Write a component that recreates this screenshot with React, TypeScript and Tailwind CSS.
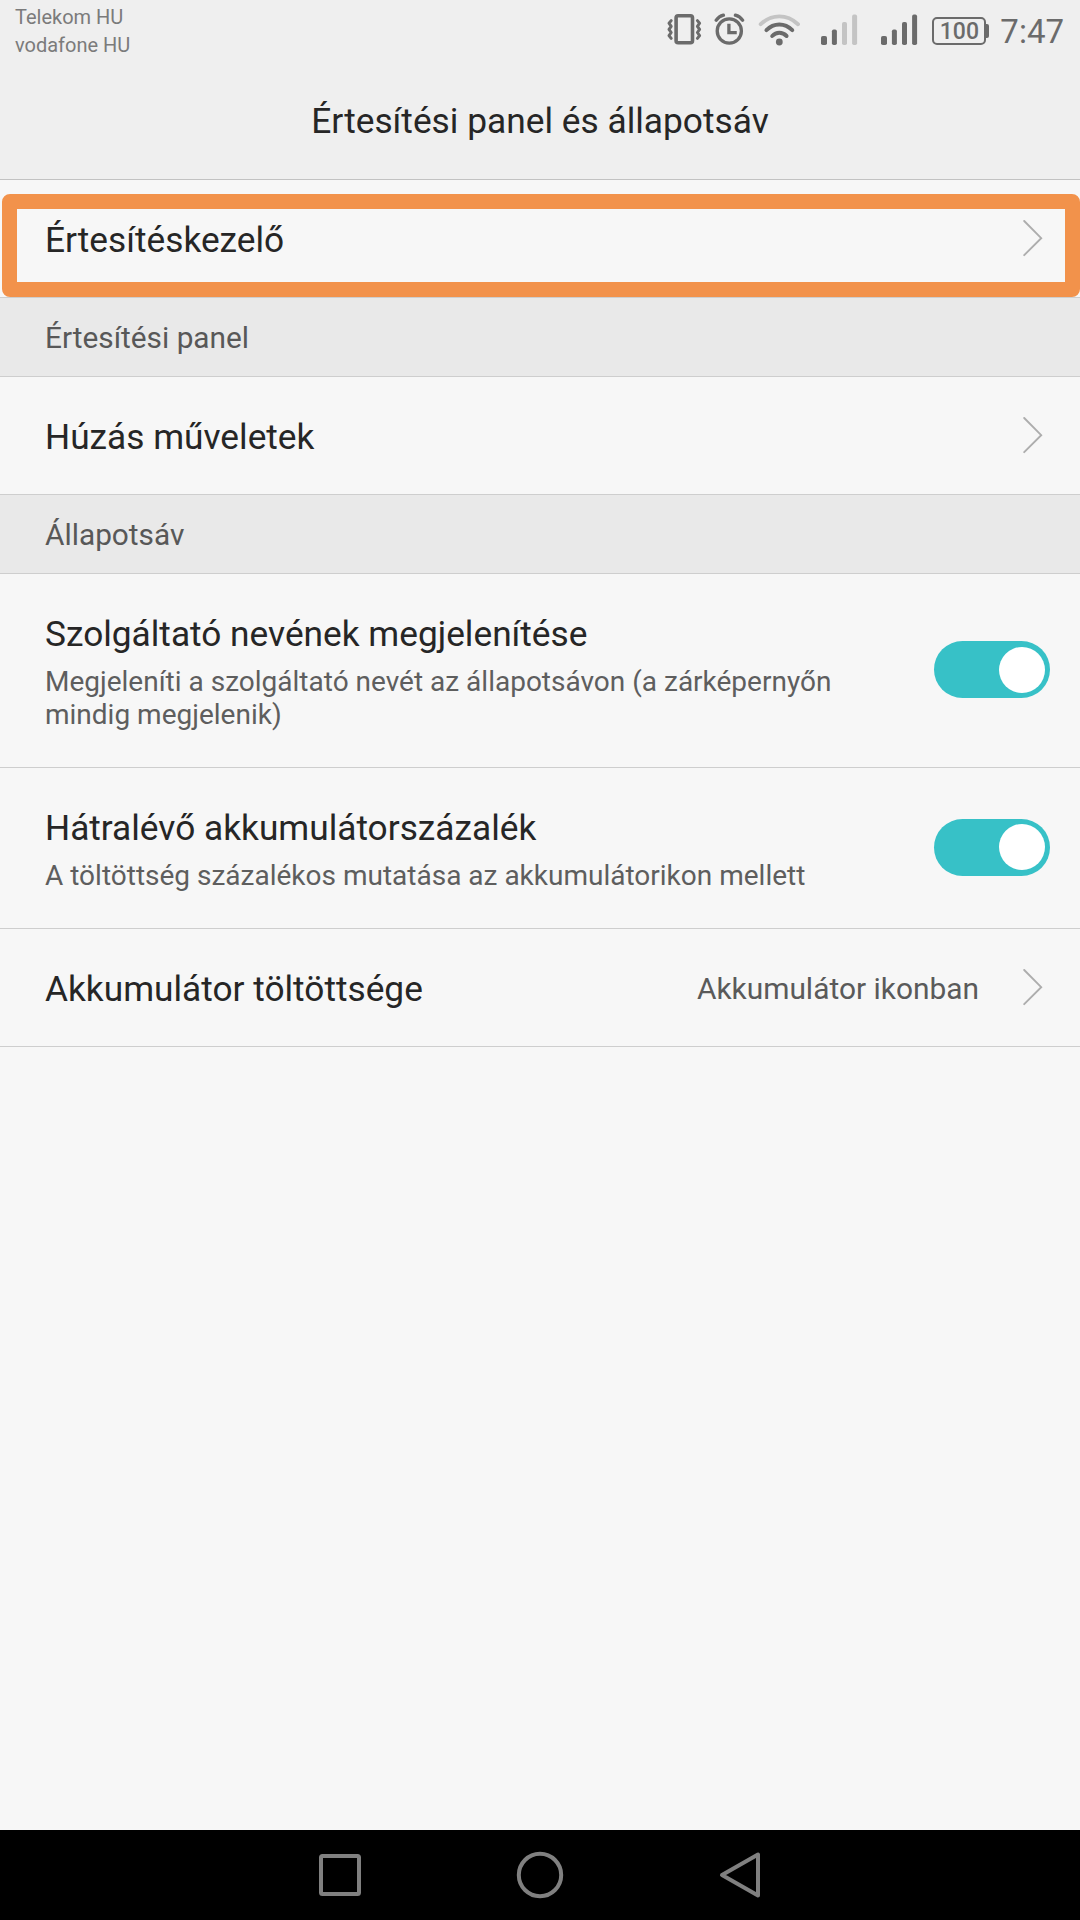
import React from "react";

interface IconProps {
  className?: string;
}

const VibrateIcon = ({ className }: IconProps) => (
  <svg viewBox="0 0 36 36" fill="none" stroke="#6b6b6b" className={`h-9 w-9 ${className ?? ""}`}>
    <rect x="10.1" y="3.8" width="16.4" height="27" rx="2" strokeWidth="3.6" />
    <path d="M5.2 8.6l-2.2 2.6 2.2 3.1-2.2 3.1 2.2 3.1-2.2 3.1 2.2 2.8" strokeWidth="3" strokeLinecap="round" strokeLinejoin="round" />
    <path d="M31.4 8.6l2.2 2.6-2.2 3.1 2.2 3.1-2.2 3.1 2.2 3.1-2.2 2.8" strokeWidth="3" strokeLinecap="round" strokeLinejoin="round" />
  </svg>
);

const AlarmIcon = ({ className }: IconProps) => (
  <svg viewBox="0 0 32 36" fill="none" stroke="#6b6b6b" className={`h-9 w-8 ${className ?? ""}`}>
    <circle cx="15.3" cy="19" r="12.1" strokeWidth="3.3" />
    <path d="M14.9 13.4v7.2h6.2" strokeWidth="3.3" strokeLinecap="square" />
    <path d="M2.2 8.2Q5 4.4 9.4 3.2M28.6 8.2Q25.8 4.4 21.4 3.2" strokeWidth="3.3" strokeLinecap="round" />
  </svg>
);

const WifiIcon = ({ className }: IconProps) => (
  <svg viewBox="0 0 44 36" fill="none" stroke="#6b6b6b" strokeWidth="3.9" strokeLinecap="round" className={`h-9 w-11 ${className ?? ""}`}>
    <path d="M2.7 12.2Q11 4.4 21.3 4.4T40 12.2" stroke="#c4c4c4" />
    <path d="M8.4 18.2Q14 12.5 21.3 12.5T34.3 18.2" />
    <path d="M14.2 24Q17.2 20.8 21.3 20.8T28.6 24" />
    <circle cx="21.3" cy="30" r="3.4" fill="#6b6b6b" stroke="none" />
  </svg>
);

const SignalIcon = ({ level, className }: IconProps & { level: number }) => {
  const tops = [24, 17.4, 10, 2.6];
  return (
    <svg viewBox="0 0 37 36" className={`h-9 w-[37px] ${className ?? ""}`}>
      {tops.map((top, i) => (
        <rect
          key={top}
          x={i === 0 ? 0 : 0.8 + i * 10.1}
          y={top}
          width={i === 0 ? 6 : 5}
          height={33 - top}
          rx="1.8"
          fill={i < level ? "#6b6b6b" : "#c4c4c4"}
        />
      ))}
    </svg>
  );
};

const Battery = ({ value, className }: IconProps & { value: number }) => (
  <div className={`flex items-center ${className ?? ""}`}>
    <div className="flex h-[28px] w-[54px] items-center justify-center rounded-[5px] border-2 border-[#6b6b6b] pt-px text-[23px] leading-none font-medium">
      {value}
    </div>
    <div className="h-[14px] w-[3px] rounded-r-[2px] bg-[#6b6b6b]" />
  </div>
);

const Chevron = () => (
  <svg viewBox="0 0 20 37" fill="none" stroke="#adadad" strokeWidth="1.9" strokeLinecap="round" className="h-[37px] w-5 shrink-0">
    <path d="M1.2 1L18.2 18.2 1.2 35.2" />
  </svg>
);

const Toggle = () => (
  <div className="mb-[5px] flex h-[57px] w-[116px] shrink-0 items-center justify-end rounded-full bg-[#37c1c7] pr-[5px]">
    <div className="size-[46px] rounded-full bg-white" />
  </div>
);

const SectionTitle = ({ children }: { children: React.ReactNode }) => (
  <div className="flex h-[79px] items-center border-b border-[#cecece] bg-[#e9e9e9] pt-[2px] pl-[45px] text-[29.8px] text-[#585858]">
    {children}
  </div>
);

interface LinkRowProps {
  title: string;
  value?: string;
  highlighted?: boolean;
}

const LinkRow = ({ title, value, highlighted }: LinkRowProps) => (
  <div className="relative flex h-[118px] items-center border-b border-[#cecece] pr-[37px] pl-[45px]">
    <span className="grow pt-[2px] text-[35.25px] leading-[42px] text-[#262626]">{title}</span>
    {value && <span className="mr-[44px] pt-[3px] text-[29.9px] text-[#5a5a5a]">{value}</span>}
    <Chevron />
    {highlighted && (
      <div className="absolute top-[14px] right-0 bottom-0 left-[2px] rounded-[8px] border-[15px] border-[#f2924b]" />
    )}
  </div>
);

interface ToggleRowProps {
  title: string;
  children: React.ReactNode;
}

const ToggleRow = ({ title, children }: ToggleRowProps) => (
  <div className="flex items-center border-b border-[#cecece] pt-[39px] pr-[30px] pb-[36px] pl-[45px]">
    <div className="grow">
      <div className="text-[35.25px] leading-[42px] text-[#262626]">{title}</div>
      <div className="mt-[10px] text-[28px] leading-[33px] text-[#5e5e5e]">{children}</div>
    </div>
    <Toggle />
  </div>
);

export default function App() {
  return (
    <div className="flex h-[1920px] w-[1080px] flex-col overflow-hidden bg-[#f7f7f7] font-['Roboto',sans-serif]">
      <header className="h-[180px] border-b border-[#c2c2c2] bg-[#efefef]">
        <div className="flex h-[60px] items-start text-[#6b6b6b]">
          <div className="grow pt-[3px] pl-[15px] text-[20px] leading-[28px] text-[#7b7b7b]">
            <div>Telekom HU</div>
            <div>vodafone HU</div>
          </div>
          <VibrateIcon className="mt-3" />
          <AlarmIcon className="mt-3 ml-[12px]" />
          <WifiIcon className="mt-3 ml-[12px]" />
          <SignalIcon level={2} className="mt-3 ml-[19px]" />
          <SignalIcon level={4} className="mt-3 ml-[23px]" />
          <Battery value={100} className="mt-[17px] ml-[14px]" />
          <div className="mr-[16px] ml-[11px] pt-[12px] text-[33px] leading-[40px]">7:47</div>
        </div>
        <h1 className="pt-[40px] text-center text-[35.3px] leading-[42px] text-[#262626]">
          Értesítési panel és állapotsáv
        </h1>
      </header>

      <main className="grow">
        <LinkRow title="Értesítéskezelő" highlighted />
        <SectionTitle>Értesítési panel</SectionTitle>
        <LinkRow title="Húzás műveletek" />
        <SectionTitle>Állapotsáv</SectionTitle>
        <ToggleRow title="Szolgáltató nevének megjelenítése">
          Megjeleníti a szolgáltató nevét az állapotsávon (a zárképernyőn
          <br />
          mindig megjelenik)
        </ToggleRow>
        <ToggleRow title="Hátralévő akkumulátorszázalék">
          A töltöttség százalékos mutatása az akkumulátorikon mellett
        </ToggleRow>
        <LinkRow title="Akkumulátor töltöttsége" value="Akkumulátor ikonban" />
      </main>

      <nav className="flex h-[90px] items-center justify-center gap-[150px] bg-black">
        <svg viewBox="0 0 50 50" fill="none" stroke="#808080" strokeWidth="4" className="size-[50px]">
          <rect x="6" y="6" width="38" height="38" rx="1.5" />
        </svg>
        <svg viewBox="0 0 50 50" fill="none" stroke="#808080" strokeWidth="4" className="size-[50px]">
          <circle cx="25" cy="25" r="21.2" />
        </svg>
        <svg viewBox="0 0 50 50" fill="none" stroke="#808080" strokeWidth="4" strokeLinejoin="round" className="size-[50px]">
          <path d="M7 25L43 4.5v41z" />
        </svg>
      </nav>
    </div>
  );
}
